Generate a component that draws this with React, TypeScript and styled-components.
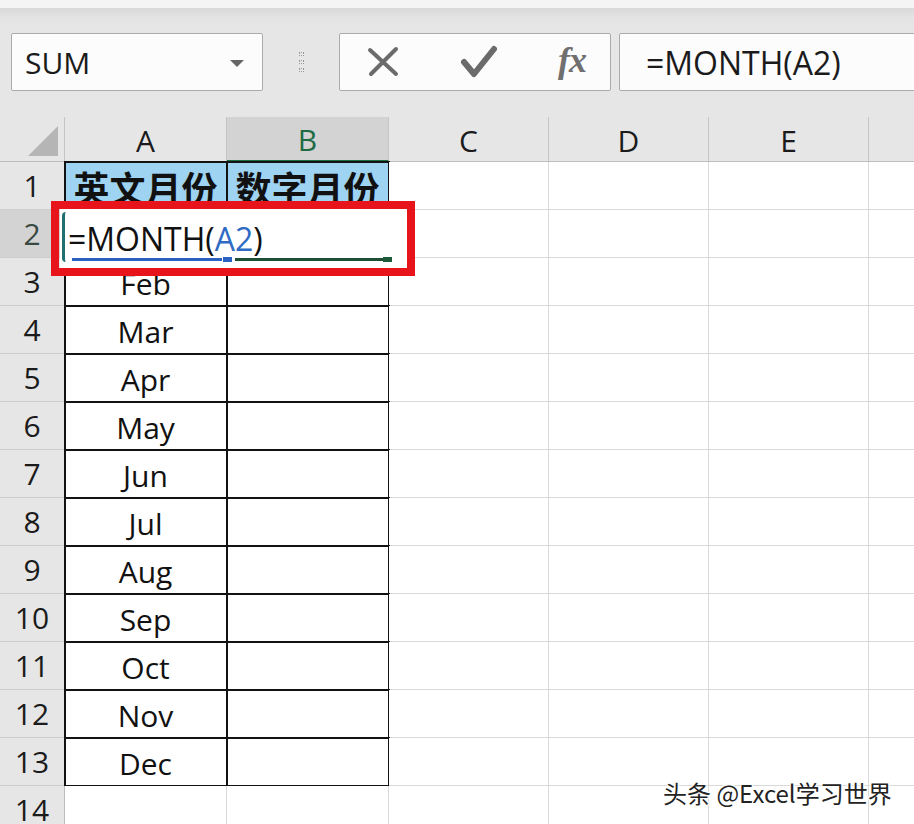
import React from "react";
import styled, { createGlobalStyle } from "styled-components";

const GlobalStyle = createGlobalStyle`
  html, body { margin: 0; padding: 0; background: #ffffff; overflow: hidden; }
  #root { width: 914px; height: 824px; }
`;

const UI_FONT = `"Open Sans", "Noto Sans", "Liberation Sans", sans-serif`;
const CJK_FONT = `"Noto Sans CJK SC", "Noto Sans", sans-serif`;

const Page = styled.div`
  width: 914px;
  height: 824px;
  overflow: hidden;
  position: relative;
  background: #ffffff;
  font-family: ${UI_FONT};
`;

const TopStrip = styled.div`
  height: 8px;
  background: #f4f4f4;
`;

const Toolbar = styled.div`
  height: 109px;
  box-sizing: border-box;
  padding: 25px 0 0 11px;
  display: flex;
  align-items: flex-start;
  background: linear-gradient(#d8d8d8 0px, #e4e4e4 10px, #e6e6e6 20px);
`;

const Box = styled.div`
  height: 58px;
  box-sizing: border-box;
  background: #fcfcfc;
  border: 1px solid #ababab;
  border-radius: 2px;
  display: flex;
  align-items: center;
  flex-shrink: 0;
`;

const NameBox = styled(Box)`
  width: 252px;
  padding: 0 18px 0 13px;
  justify-content: space-between;
  font-size: 30px;
  color: #1b1b1b;
`;

const DropArrow = styled.span`
  width: 0;
  height: 0;
  border-left: 7px solid transparent;
  border-right: 7px solid transparent;
  border-top: 7px solid #666;
  margin-top: 2px;
`;

const Grip = styled.div`
  width: 76px;
  height: 58px;
  display: flex;
  flex-direction: column;
  align-items: center;
  justify-content: center;
  gap: 4px;
  flex-shrink: 0;
`;

const GripDot = styled.span`
  width: 5px;
  height: 4px;
  border: 1px dotted #9a9a9a;
  box-sizing: border-box;
`;

const FxButtons = styled(Box)`
  width: 272px;
  padding: 0 24px 0 26px;
  justify-content: space-between;
`;

const FxText = styled.span`
  font-family: "Liberation Serif", "DejaVu Serif", serif;
  font-style: italic;
  font-weight: 700;
  font-size: 36px;
  color: #6f6f6f;
  letter-spacing: -1px;
  margin-top: -4px;
`;

const FormulaInput = styled(Box)`
  width: 320px;
  margin-left: 8px;
  padding-left: 26px;
  font-size: 32px;
  color: #1b1b1b;
`;

const Sheet = styled.div`
  position: relative;
  display: grid;
  grid-template-columns: 65px 162px 162px 160px 160px 160px 160px;
  grid-template-rows: 45px repeat(14, 48px);
  width: 1029px;
`;

const Corner = styled.div`
  background: #e6e6e6;
  border-right: 1px solid #c4c4c4;
  border-bottom: 1px solid #bdbdbd;
  box-sizing: border-box;
  display: flex;
  align-items: flex-end;
  justify-content: flex-end;
  padding: 0 6px 5px 0;
`;

const CornerTriangle = styled.span`
  width: 0;
  height: 0;
  border-left: 30px solid transparent;
  border-bottom: 30px solid #b5b5b5;
`;

const ColHeader = styled.div<{ $selected?: boolean }>`
  box-sizing: border-box;
  background: ${(p) => (p.$selected ? "#d3d3d3" : "#e6e6e6")};
  border-right: 1px solid #c4c4c4;
  border-bottom: ${(p) => (p.$selected ? "2px solid #1f6b46" : "1px solid #bdbdbd")};
  color: ${(p) => (p.$selected ? "#1e6b44" : "#1b1b1b")};
  font-size: 30px;
  display: flex;
  align-items: center;
  justify-content: center;
  padding-top: 2px;
`;

const RowHeader = styled.div<{ $selected?: boolean }>`
  box-sizing: border-box;
  background: ${(p) => (p.$selected ? "#d3d3d3" : "#e6e6e6")};
  border-right: 1px solid #bdbdbd;
  border-bottom: 1px solid #cdcdcd;
  color: ${(p) => (p.$selected ? "#3a4a42" : "#1b1b1b")};
  font-size: 30px;
  display: flex;
  align-items: center;
  justify-content: center;
`;

const Cell = styled.div<{ $table?: boolean; $head?: boolean }>`
  box-sizing: border-box;
  border-right: 1px solid #d9d9d9;
  border-bottom: 1px solid #d9d9d9;
  background: ${(p) => (p.$head ? "#9fd3f2" : "#ffffff")};
  outline: ${(p) => (p.$table ? "2px solid #121212" : "none")};
  outline-offset: -1px;
  display: flex;
  align-items: center;
  justify-content: center;
  padding-top: ${(p) => (p.$head ? "2px" : "4px")};
  font-size: ${(p) => (p.$head ? "36px" : "30px")};
  line-height: ${(p) => (p.$head ? 1 : "normal")};
  font-weight: ${(p) => (p.$head ? 700 : 400)};
  font-family: ${(p) => (p.$head ? CJK_FONT : UI_FONT)};
  color: #111;
  white-space: nowrap;
`;

const EditBox = styled.div`
  position: absolute;
  left: 60px;
  top: 92px;
  width: 347px;
  height: 59px;
  background: #ffffff;
  z-index: 2;
  display: flex;
  align-items: center;
  padding-left: 8px;
  box-sizing: border-box;
  font-size: 32px;
  color: #111;
`;

const RefText = styled.span`
  color: #2f6bc4;
`;

const RefBracket = styled.span`
  position: absolute;
  left: 2px;
  top: 3px;
  width: 5px;
  height: 50px;
  border-left: 3px solid #1f6e70;
  border-radius: 4px 0 0 4px;
  box-sizing: border-box;
`;

const RefLine = styled.span<{ $color: string; $left: number; $width: number }>`
  position: absolute;
  top: 49px;
  left: ${(p) => p.$left}px;
  width: ${(p) => p.$width}px;
  height: 3px;
  background: ${(p) => p.$color};
`;

const RefHandle = styled.span<{ $color: string; $left: number }>`
  position: absolute;
  top: 48px;
  left: ${(p) => p.$left}px;
  width: 9px;
  height: 5px;
  background: ${(p) => p.$color};
`;

const RedFrame = styled.div`
  position: absolute;
  left: 51px;
  top: 84px;
  width: 364px;
  height: 75px;
  border: 8px solid #e8141b;
  box-sizing: border-box;
  z-index: 3;
`;

const Watermark = styled.div`
  position: absolute;
  left: 663px;
  top: 775px;
  font-family: ${CJK_FONT};
  font-size: 24px;
  color: #222;
  text-shadow: 0 0 2px #fff, 1px 1px 0 #fff, -1px -1px 0 #fff, 1px -1px 0 #fff, -1px 1px 0 #fff;
  white-space: nowrap;
  z-index: 4;
`;

const columns = ["A", "B", "C", "D", "E", ""];
const months = ["", "Feb", "Mar", "Apr", "May", "Jun", "Jul", "Aug", "Sep", "Oct", "Nov", "Dec"];

const CloseIcon = () => (
  <svg width="34" height="32" viewBox="0 0 34 32">
    <path d="M4 4 L30 28 M30 3 L5 28" stroke="#6b6b6b" strokeWidth="4" strokeLinecap="round" fill="none" />
  </svg>
);

const CheckIcon = () => (
  <svg width="38" height="36" viewBox="0 0 38 36">
    <path d="M4 18 L14 30 L34 5" stroke="#6b6b6b" strokeWidth="6" strokeLinecap="round" strokeLinejoin="round" fill="none" />
  </svg>
);

export default function App() {
  const rows: React.ReactNode[] = [];
  for (let r = 1; r <= 14; r++) {
    rows.push(
      <RowHeader key={`rh${r}`} $selected={r === 2}>
        {r}
      </RowHeader>
    );
    columns.forEach((c, ci) => {
      const inTable = ci < 2 && r <= 13;
      let content: React.ReactNode = null;
      if (r === 1 && ci === 0) content = "英文月份";
      if (r === 1 && ci === 1) content = "数字月份";
      if (r >= 3 && r <= 13 && ci === 0) content = months[r - 2];
      rows.push(
        <Cell key={`c${r}-${ci}`} $table={inTable} $head={r === 1 && ci < 2}>
          {content}
        </Cell>
      );
    });
  }

  return (
    <Page>
      <GlobalStyle />
      <TopStrip />
      <Toolbar>
        <NameBox>
          <span>SUM</span>
          <DropArrow />
        </NameBox>
        <Grip>
          <GripDot />
          <GripDot />
          <GripDot />
        </Grip>
        <FxButtons>
          <CloseIcon />
          <CheckIcon />
          <FxText>fx</FxText>
        </FxButtons>
        <FormulaInput>=MONTH(A2)</FormulaInput>
      </Toolbar>
      <Sheet>
        <Corner>
          <CornerTriangle />
        </Corner>
        {columns.map((c, i) => (
          <ColHeader key={`h${i}`} $selected={c === "B"}>
            {c}
          </ColHeader>
        ))}
        {rows}
        <EditBox>
          <RefBracket />
          <span>=MONTH(</span>
          <RefText>A2</RefText>
          <span>)</span>
          <RefLine $color="#2a62c4" $left={12} $width={150} />
          <RefHandle $color="#2a62c4" $left={163} />
          <RefLine $color="#1d4f35" $left={175} $width={149} />
          <RefHandle $color="#1d5a3a" $left={323} />
        </EditBox>
        <RedFrame />
      </Sheet>
      <Watermark>头条 @Excel学习世界</Watermark>
    </Page>
  );
}
